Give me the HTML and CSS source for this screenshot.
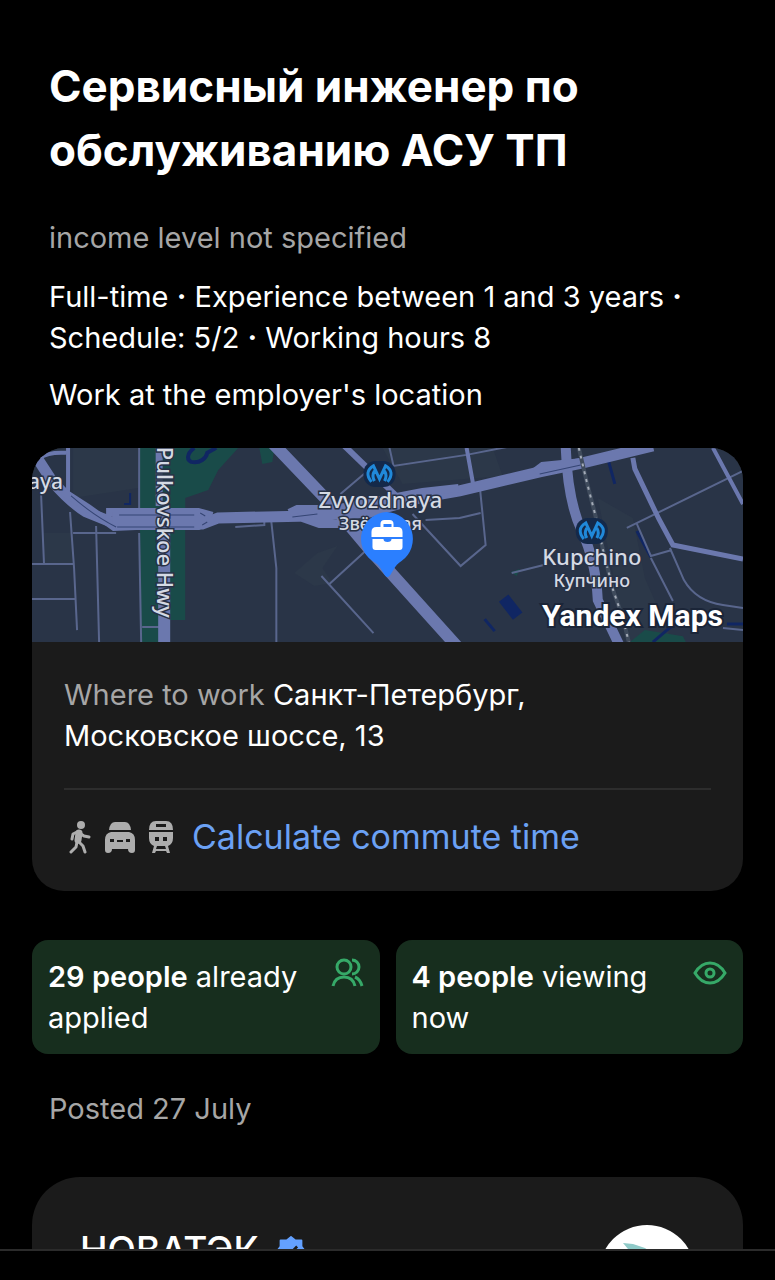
FILE: index.html
```html
<!DOCTYPE html>
<html lang="en">
<head>
  <meta charset="UTF-8">
  <meta name="viewport" content="width=device-width, initial-scale=1.0">
  <title>Сервисный инженер по обслуживанию АСУ ТП</title>
  <link rel="stylesheet" href="styles.css">
</head>

<body>
  <main class="vacancy">

    <header class="vacancy-header">
      <h1 class="vacancy-title">Сервисный инженер по обслуживанию АСУ ТП</h1>
      <p class="vacancy-income">income level not specified</p>
      <p class="vacancy-terms">Full-time <b>·</b> Experience between 1 and 3 years <b>·</b> Schedule: 5/2 <b>·</b> Working hours 8</p>
      <p class="vacancy-terms">Work at the employer's location</p>
    </header>

    <section class="place">
      <svg class="place-map" viewBox="0 0 710 194" preserveAspectRatio="xMidYMid slice" role="img" aria-label="Map">
        <rect width="710" height="194" fill="#293447"/>

        <!-- parks and buildings -->
        <g fill="#2c3849">
          <path d="M41 50L106 40V0H41zM12 85H40V115H12zM350 0H460L470 28 370 36zM565 50L600 70 612 130 640 194H594z"/>
          <path d="M285 105L305 98 290 120 300 135 282 138 262 125z"/>
        </g>
        <path d="M107 0H206L186 22 176 42 153 50V172H132V194H109z" fill="#194b49"/>
        <path d="M227 0H242L240 14 230 16zM597 194L612 182 650 188 653 194zM478 124L487 121 484 128z" fill="#194b49"/>
        <g fill="none" stroke="#102663" stroke-width="4">
          <path d="M162 0C155 5 154 12 159 14C168 16 174 10 175 5L184 0"/>
          <path d="M574 7L582 36M604 83L618 109M452 171L462 183" stroke-width="3"/>
          <path d="M471 150L485 168" stroke-width="12"/>
          <path d="M620 194L634 182 642 176M694 176H710" stroke-width="3"/>
          <path d="M98 45V56H92" stroke-width="2"/>
        </g>

        <!-- streets -->
        <g fill="none" stroke="#59668d" stroke-width="2">
          <path d="M9 45L12 116M0 116H42M0 151H43M38 64L42 120 45 182M41 85H84M64 78L67 194M107 0V64M107 85L109 194M110 179H127"/>
          <path d="M239 74L244 120V194M289 128L341 185M297 136L333 103M308 46L335 23M357 0L361 18 434 7 480 -2M447 37L453 97 428 118 380 66M393 72L427 70 448 65"/>
          <path d="M594 80L710 23M604 76L618 108 639 102M618 110L640 153M637 100L651 132Q663 153 690 157L710 160M690 180L710 182M479 125L511 117"/>
          <path d="M203 79L232 77V73"/>
        </g>
        <g fill="none" stroke="#6b78ae">
          <path d="M127 0V58" stroke-width="7"/>
          <path d="M132 75V194" stroke-width="12"/>
          <path d="M36 0V42L34 50M8 10Q16 4 34 5M434 0L441 39M680 0L710 56" stroke-width="4"/>
          <path d="M600 10L602 21 626 71 640 97 710 111" stroke-width="5"/>
          <path d="M240 -5L304 62 336 100 426 200" stroke-width="12"/>
          <path d="M311 -3L370 54" stroke-width="6"/>
          <path d="M533 0Q535 53 549 83T565 152L587 198" stroke-width="10"/>
          <path d="M3 7L20 33Q37 53 54 64L84 76H170L186 70 277 68 337 64 387 50 427 43 507 24 550 15 620 -2" stroke-width="11"/>
          <path d="M31 44L56 60 82 79 104 78H166L180 70M74 64H166L180 68M257 65L265 61H302L390 44 426 40M270 70L287 76H326M502 24L510 18 550 14" stroke-width="8"/>
          <path d="M80 70H176" stroke-width="12"/>
        </g>
        <g fill="none" stroke="#354574" stroke-width="1">
          <path d="M39 48Q62 68 84 79M87 67H162M85 79H162M168 65L173 68M170 77L175 74M260 69L285 66M507 26L548 17"/>
        </g>
        <path d="M546 0L554 34 563 69 570 101 580 141 590 170 596 194" fill="none" stroke="#3f4b5c" stroke-width="4"/>
        <path d="M546 0L554 34 563 69 570 101 580 141 590 170 596 194" fill="none" stroke="#a5acb8" stroke-width="2" stroke-dasharray="3 5"/>

        <!-- metro signs -->
        <g id="metro" transform="translate(347 26)">
          <rect x="-16" y="-13" width="32" height="26" rx="12" fill="#14294a"/>
          <path d="M-8 8Q-16 -2 -6 -8L0 5L6 -8Q16 -2 8 8M-5 7Q-8 2 -5 -3M5 7Q8 2 5 -3" fill="none" stroke="#2089da" stroke-width="3"/>
        </g>
        <use href="#metro" x="212" y="57"/>

        <g class="map-label">
          <text x="-4" y="41" font-size="21">aya</text>
          <text transform="translate(125 -1) rotate(90)" font-size="22">Pulkovskoe Hwy</text>
          <text x="348" y="60" font-size="22" text-anchor="middle">Zvyozdnaya</text>
          <text x="348" y="82" font-size="18" text-anchor="middle">Звёздная</text>
          <text x="559" y="117" font-size="22" text-anchor="middle">Kupchino</text>
          <text x="559" y="139" font-size="18" text-anchor="middle">Купчино</text>
        </g>

        <path d="M354 64a27 27 0 0 1 15 49c-5 3-7 7-10 12q-4 8-8 0c-3-5-5-9-11-12a27 27 0 0 1 14-49z" fill="#2b7fff"/>
        <path d="M344 79h4v-3q0-4 4-4h5q4 0 4 4v3h4q5 0 5 5v5h-31v-5q0-5 5-5zM351 79h8v-3h-8zM340 91h11q0 3 4 3t4-3h11v8q0 3-3 3h-24q-3 0-3-3z" fill="#fff" fill-rule="evenodd"/>

        <text class="map-brand" x="690" y="178" text-anchor="end">Yandex Maps</text>
      </svg>

      <div class="place-body">
        <p class="place-address"><span class="muted">Where to work</span> Санкт-Петербург, Московское шоссе, 13</p>
        <div class="place-commute">
          <div class="commute-icons">
            <svg width="28" height="34" viewBox="0 0 28 34" fill="none" stroke="#adadad" stroke-linecap="round" stroke-linejoin="round">
              <circle cx="17" cy="5" r="4" fill="#adadad" stroke="none"/>
              <path d="M15 13L14 20" stroke-width="7"/>
              <path d="M13 12L9 14 8 19M17 14L20 16 25 17M15 22L19 26 21 32M13 22L12 27 7 32" stroke-width="3"/>
            </svg>
            <svg width="32" height="34" viewBox="0 0 32 34" fill="#adadad">
              <path d="M5 10Q6 2 11 2H21Q26 2 27 10z"/>
              <path fill-rule="evenodd" d="M7 12H25Q31 13 31 20V30Q31 33 28 33Q24 33 24 29H8Q8 33 4 33Q1 33 1 30V20Q1 13 7 12zM6 19v3h4v-3zM13 20v2h6v-2zM22 19v3h4v-3z"/>
            </svg>
            <svg width="26" height="34" viewBox="0 0 26 34" fill="#adadad">
              <path fill-rule="evenodd" d="M8 1H18Q25 1 25 10H1Q1 1 8 1zM8 4v3h10V4z"/>
              <path fill-rule="evenodd" d="M1 12H25V18Q25 24 20 26L22 33H19L18 31H8L7 33H4L6 26Q1 24 1 18zM7 17v4h4v-4zM15 17v4h4v-4zM9 26L8 29H18L17 26z"/>
            </svg>
          </div>
          <a class="commute-link" href="#commute">Calculate commute time</a>
        </div>
      </div>
    </section>

    <section class="stats">
      <div class="stat">
        <p class="stat-text"><b>29 people</b> already applied</p>
        <svg class="stat-icon" width="34" height="34" viewBox="0 0 34 34">
          <circle cx="14" cy="11" r="7"/>
          <path d="M22 4a7 7 0 0 1 0 14M3 30Q5 21 14 21T25 30M25 21Q30 23 32 30"/>
        </svg>
      </div>
      <div class="stat">
        <p class="stat-text"><b>4 people</b> viewing now</p>
        <svg class="stat-icon" width="34" height="34" viewBox="0 0 34 34">
          <path d="M2 17Q8 7 17 7T32 17Q26 27 17 27T2 17z"/>
          <circle cx="17" cy="17" r="4"/>
        </svg>
      </div>
    </section>

    <p class="vacancy-posted">Posted 27 July</p>

    <section class="company">
      <h2 class="company-name">НОВАТЭК
        <svg class="company-badge" width="28" height="28" viewBox="0 0 32 32">
          <path d="M16 1L21 5H28V12L31 16 28 20V27H21L16 31 11 27H4V20L1 16 4 12V5H11z" fill="#64a1ff" stroke="#64a1ff" stroke-width="2" stroke-linejoin="round"/>
          <path d="M10 17L14 21 23 12" fill="none" stroke="#1b1b1b" stroke-width="3"/>
        </svg>
      </h2>
      <svg class="company-logo" width="96" height="96" viewBox="0 0 96 96">
        <circle cx="48" cy="48" r="48" fill="#fff"/>
        <path d="M24 18L34 19 46 23 56 30H34z" fill="#8fcac8"/>
      </svg>
    </section>

  </main>
  <footer class="bottom-bar"></footer>
</body>

</html>
```
FILE: styles.css
```css
* {
  box-sizing: border-box;
}

body {
  display: flex;
  flex-direction: column;
  height: 100vh;
  margin: 0;
  background-color: #000;
  color: #fff;
  font-family: Inter, "Liberation Sans", sans-serif;
  font-size: 29px;
  line-height: 41px;
}

h1,
h2,
p {
  margin: 0;
}

.vacancy {
  flex: 1;
  min-height: 0;
  padding: 54px 32px 0;
  overflow: hidden;
}

.vacancy-header,
.vacancy-posted {
  padding: 0 17px;
}

.vacancy-title {
  margin-bottom: 35px;
  font-size: 44px;
  line-height: 64px;
}

.vacancy-income {
  margin-bottom: 18px;
}

.vacancy-income,
.vacancy-posted,
.muted {
  color: #a6a6a6;
}

.vacancy-terms {
  margin-bottom: 16px;
}

.place {
  margin-top: 33px;
  border-radius: 32px;
  background-color: #1b1b1b;
  overflow: hidden;
}

.place-map {
  display: block;
  width: 100%;
  height: 194px;
}

.map-label {
  fill: #d5dae4;
  stroke: #283246;
  stroke-width: 3px;
  paint-order: stroke;
  font-family: "Noto Sans", sans-serif;
  font-weight: 500;
}

.map-brand {
  fill: #fff;
  stroke: #1b2538;
  stroke-width: 4px;
  paint-order: stroke;
  font-family: Roboto, sans-serif;
  font-size: 30px;
  font-weight: 700;
}

.place-body {
  padding: 32px 32px 34px;
}

.place-address {
  padding-right: 32px;
}

.place-commute {
  display: flex;
  align-items: center;
  margin-top: 32px;
  padding-top: 26px;
  border-top: 2px solid #2d2d2d;
}

.commute-icons {
  display: flex;
  gap: 12px;
  margin-right: 18px;
}

.commute-link {
  color: #6ba1f4;
  font-size: 34px;
  text-decoration: none;
}

.stats {
  display: grid;
  grid-template-columns: 1fr 1fr;
  gap: 16px;
  margin: 49px 0 34px;
}

.stat {
  display: flex;
  justify-content: space-between;
  padding: 16px;
  border-radius: 16px;
  background-color: #172e1e;
}

.stat-text b {
  font-weight: 600;
}

.stat-icon {
  flex: none;
  fill: none;
  stroke: #36a968;
  stroke-width: 3px;
}

.company {
  display: flex;
  align-items: flex-start;
  justify-content: space-between;
  margin-top: 48px;
  padding: 48px;
  border-radius: 48px;
  background-color: #1b1b1b;
}

.company-name {
  display: flex;
  align-items: center;
  gap: 18px;
  margin-top: 4px;
  font-size: 37px;
  font-weight: 500;
}

.bottom-bar {
  flex: none;
  height: 31px;
  border-top: 2px solid #2b2b2b;
}
```
